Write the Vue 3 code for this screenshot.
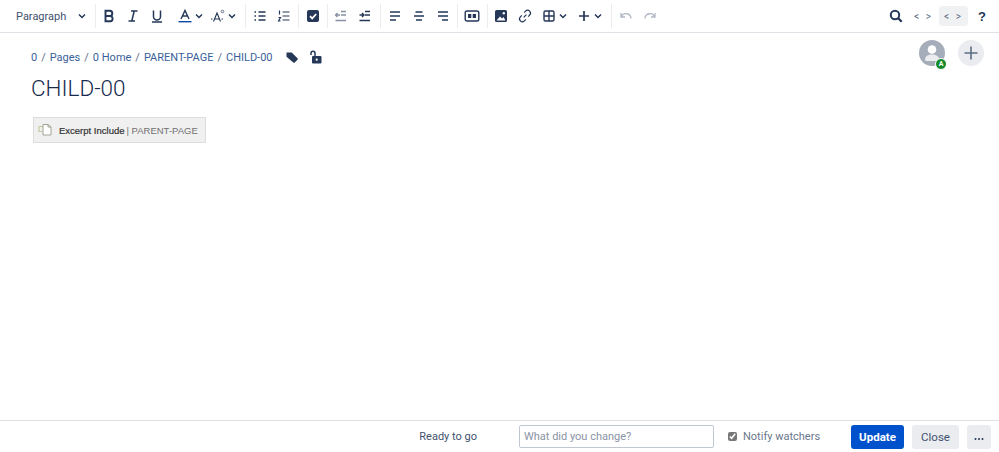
<script setup>
const crumbs = ['0', 'Pages', '0 Home', 'PARENT-PAGE', 'CHILD-00']
</script>

<template>
  <div class="editor">
    <div class="toolbar">
      <div class="group format-group">
        <button class="format" type="button">
          <span>Paragraph</span>
          <svg class="chev" width="10" height="10" viewBox="0 0 10 10"><path d="M2 3.500l3 3 3-3" /></svg>
        </button>
      </div>
      <div class="group tight">
        <button class="tb" type="button"><svg width="16" height="16" viewBox="0 0 16 16"><path class="stk" d="M4.500 2.800h4.200a2.600 2.600 0 0 1 0 5.200H4.500zM4.500 8h4.900a2.700 2.700 0 0 1 0 5.300H4.500z" stroke-width="1.900" /></svg></button>
        <button class="tb" type="button"><svg width="16" height="16" viewBox="0 0 16 16"><path class="stk" d="M6 3h6.500M3.500 13H10M9.200 3L6.800 13" stroke-width="1.500" /></svg></button>
        <button class="tb" type="button"><svg width="16" height="16" viewBox="0 0 16 16"><path class="stk" d="M4.500 2.500v6a3.500 3.500 0 0 0 7 0v-6M3 14h10" stroke-width="1.500" /></svg></button>
        <button class="tb wide color-btn" type="button">
          <svg width="16" height="16" viewBox="0 0 16 16"><path class="stk" d="M4 11L8 2.500 12 11M5.400 8h5.200" stroke-width="1.400" /><path d="M1.500 13h13v1.400h-13z" fill="#0747a6" /></svg>
          <svg class="chev" width="10" height="10" viewBox="0 0 10 10"><path d="M2 3.500l3 3 3-3" /></svg>
        </button>
        <button class="tb wide" type="button">
          <svg width="16" height="16" viewBox="0 0 16 16"><path class="stk" d="M3.500 13.500L7 5l3.500 8.500M1 11h1.500M4 11h6M11.500 11H13" stroke-width="1.100" /><circle cx="12.500" cy="3.500" r="1.300" fill="none" stroke="#42526e" stroke-width="0.800" /></svg>
          <svg class="chev" width="10" height="10" viewBox="0 0 10 10"><path d="M2 3.500l3 3 3-3" /></svg>
        </button>
      </div>
      <div class="group">
        <button class="tb" type="button"><svg width="16" height="16" viewBox="0 0 16 16"><path class="stk" d="M6.500 4h7M6.500 8h7M6.500 12h7M2.500 4h1.500M2.500 8h1.500M2.500 12h1.500" stroke-width="1.300" /></svg></button>
        <button class="tb" type="button"><svg width="16" height="16" viewBox="0 0 16 16"><path class="stk" d="M6.500 4h7M6.500 8h7M6.500 12h7M3.500 2.500v4M2.500 9.500h2l-2 3.500h2" stroke-width="1.200" /></svg></button>
      </div>
      <div class="group">
        <button class="tb" type="button"><svg width="16" height="16" viewBox="0 0 16 16"><rect x="2" y="2" width="12" height="12" rx="2" fill="#253858" /><path d="M5 8.200l2.200 2.200L11.200 6" fill="none" stroke="#fff" stroke-width="1.700" /></svg></button>
      </div>
      <div class="group tight roomy">
        <button class="tb muted" type="button"><svg width="16" height="16" viewBox="0 0 16 16"><path class="stk" d="M8 3.500h5M8 7h5M2.500 12.500h10.500M7 7H2.500M4.500 5l-2 2 2 2" stroke-width="1.300" /></svg></button>
        <button class="tb" type="button"><svg width="16" height="16" viewBox="0 0 16 16"><path class="stk" d="M8 3.500h5M8 7h5M2.500 12.500h10.500M2.500 7H7M5 5l2 2-2 2" stroke-width="1.400" /></svg></button>
      </div>
      <div class="group">
        <button class="tb" type="button"><svg width="16" height="16" viewBox="0 0 16 16"><path class="stk" d="M3 4h10M3 8h10M3 12h6" stroke-width="1.500" /></svg></button>
        <button class="tb" type="button"><svg width="16" height="16" viewBox="0 0 16 16"><path class="stk" d="M3 8h10M4.500 4h7M5 12h6" stroke-width="1.500" /></svg></button>
        <button class="tb" type="button"><svg width="16" height="16" viewBox="0 0 16 16"><path class="stk" d="M3 4h10M3 8h10M7 12h6" stroke-width="1.500" /></svg></button>
      </div>
      <div class="group roomy">
        <button class="tb" type="button"><svg width="16" height="16" viewBox="0 0 16 16"><rect x="1.200" y="3" width="13.600" height="10" rx="1.800" fill="none" stroke="#253858" stroke-width="1.400" /><path d="M4 6h3.300v4H4zM8.700 6H12v4H8.700z" fill="#253858" /></svg></button>
      </div>
      <div class="group tight">
        <button class="tb" type="button"><svg width="16" height="16" viewBox="0 0 16 16"><rect x="2" y="2" width="12" height="12" rx="1.500" fill="#253858" /><path d="M3.500 12.500l3.500-4 2 2 1.500-1.500 2 3.500z" fill="#fff" /><circle cx="10.800" cy="5.200" r="1.200" fill="#fff" /></svg></button>
        <button class="tb" type="button"><svg width="16" height="16" viewBox="0 0 16 16"><path class="stk" d="M6.700 9.300l2.700-2.700M7.200 4.600l1.400-1.400a2.800 2.800 0 0 1 4 4l-1.400 1.400M8.800 11.400l-1.400 1.400a2.800 2.800 0 0 1-4-4l1.400-1.400" stroke-width="1.200" /></svg></button>
        <button class="tb wide table-btn" type="button">
          <svg width="16" height="16" viewBox="0 0 16 16"><rect x="3" y="3" width="10" height="10" rx="1.500" fill="none" stroke="#253858" stroke-width="1.400" /><path d="M8 3v10M3 8h10" stroke="#253858" stroke-width="1.400" /></svg>
          <svg class="chev" width="10" height="10" viewBox="0 0 10 10"><path d="M2 3.500l3 3 3-3" /></svg>
        </button>
        <button class="tb wide plus-btn" type="button">
          <svg width="16" height="16" viewBox="0 0 16 16"><path class="stk" d="M8 3v10M3 8h10" stroke-width="1.700" /></svg>
          <svg class="chev" width="10" height="10" viewBox="0 0 10 10"><path d="M2 3.500l3 3 3-3" /></svg>
        </button>
      </div>
      <div class="group last">
        <button class="tb faint" type="button"><svg width="16" height="16" viewBox="0 0 16 16"><path class="stk" d="M3 5v4h4M3.300 9a5 5 0 0 1 9.700 1.500" stroke-width="1.300" /></svg></button>
        <button class="tb faint" type="button"><svg width="16" height="16" viewBox="0 0 16 16"><path class="stk" d="M13 5v4H9M12.700 9A5 5 0 0 0 3 10.500" stroke-width="1.300" /></svg></button>
      </div>
      <div class="tool-right">
        <button class="tb" type="button"><svg width="16" height="16" viewBox="0 0 16 16"><circle cx="7" cy="7" r="4.200" fill="none" stroke="#253858" stroke-width="2" /><path d="M10 10l3.700 3.700" stroke="#253858" stroke-width="2.300" /></svg></button>
        <button class="code" type="button">&lt; &gt;</button>
        <button class="code active" type="button">&lt; &gt;</button>
        <button class="help" type="button">?</button>
      </div>
    </div>

    <div class="content">
      <div class="page-head">
        <nav class="crumbs">
          <template v-for="(c, i) in crumbs" :key="c">
            <span v-if="i" class="slash">/</span>
            <a>{{ c }}</a>
          </template>
          <svg class="meta tag" width="16" height="16" viewBox="0 0 16 16"><path d="M2.500 3.500h5.200l5.800 5.800a1 1 0 0 1 0 1.400l-2.800 2.800a1 1 0 0 1-1.400 0L2.500 7.700z" fill="#253858" /></svg>
          <svg class="meta" width="16" height="16" viewBox="0 0 16 16"><rect x="4" y="7" width="9.500" height="7.500" rx="1" fill="#253858" /><circle cx="8.700" cy="10.700" r="1.100" fill="#fff" /><path d="M3 6V4.200a2 2 0 0 1 4 0V7" fill="none" stroke="#253858" stroke-width="1.500" /></svg>
        </nav>
        <div class="people">
          <div class="avatar">
            <svg width="26" height="26" viewBox="0 0 26 26"><circle cx="13" cy="13" r="13" fill="#a5adba" /><circle cx="13" cy="9.500" r="4.300" fill="#fff" /><path d="M6 19.500c0-3.500 3-5 7-5s7 1.500 7 5a1.500 1.500 0 0 1-1.500 1.500h-11A1.500 1.500 0 0 1 6 19.500z" fill="#ebecf0" /></svg>
            <span class="badge">A</span>
          </div>
          <button class="add" type="button"><svg width="16" height="16" viewBox="0 0 16 16"><path d="M8 1.500v13M1.500 8h13" stroke="#5e6c84" stroke-width="1.600" fill="none" /></svg></button>
        </div>
      </div>
      <h1 class="title">CHILD-00</h1>
      <div class="macro">
        <svg width="16" height="14" viewBox="0 0 16 14"><path d="M1 3.500h4M1 3.500v5h3" fill="none" stroke="#c5c89a" stroke-width="1.100" /><path d="M5 1.500h5l3 2.500v8H5z" fill="#fff" stroke="#9a9a8a" stroke-width="0.900" /><path d="M10 1.500V4h3" fill="none" stroke="#9a9a8a" stroke-width="0.900" /></svg>
        <span class="macro-name">Excerpt Include</span>
        <span class="macro-param">| PARENT-PAGE</span>
      </div>
    </div>

    <div class="footer">
      <span class="status">Ready to go</span>
      <input class="comment" type="text" placeholder="What did you change?" />
      <label class="notify"><input type="checkbox" checked /> <span>Notify watchers</span></label>
      <button class="btn btn-primary" type="button">Update</button>
      <button class="btn btn-close" type="button">Close</button>
      <button class="btn btn-more" type="button">
        <svg width="10" height="4" viewBox="0 0 10 4"><circle cx="1.500" cy="2" r="1" /><circle cx="5" cy="2" r="1" /><circle cx="8.500" cy="2" r="1" /></svg>
      </button>
    </div>
  </div>
</template>

<style>
html, body { margin: 0; background: #fff; }
</style>

<style scoped>
.editor {
  height: 452px;
  display: flex;
  flex-direction: column;
  font-family: Roboto, "Noto Sans", sans-serif;
  color: #172b4d;
  overflow: hidden;
}

button {
  border: 0;
  background: transparent;
  padding: 0;
  font: inherit;
}

.toolbar {
  height: 32px;
  flex: none;
  display: flex;
  align-items: center;
  border-bottom: 1px solid #dfe1e6;
}

.group {
  display: flex;
  align-items: center;
  height: 24px;
  padding: 0 2px;
  border-right: 1px solid #ebecf0;
}

.group.tight { padding-left: 1px; }
.group.roomy { padding-right: 3px; }
.group.last { border-right: 0; }
.format-group { padding: 0; }

.format {
  width: 95px;
  display: flex;
  align-items: center;
  justify-content: space-between;
  padding: 0 8px 0 16px;
  box-sizing: border-box;
  font-size: 11px;
  color: #42526e;
}

.tb {
  width: 24px;
  height: 24px;
  flex: none;
  display: flex;
  align-items: center;
  justify-content: center;
}

.tb.wide { width: 33px; justify-content: flex-start; padding-left: 0; }
.color-btn { margin-left: 8px; }
.table-btn { margin-left: 4px; }
.plus-btn { margin-left: 2px; }
.tb.muted { opacity: 0.55; }
.tb.faint { opacity: 0.35; }

.stk {
  fill: none;
  stroke: #253858;
}

.chev {
  flex: none;
  margin-left: 1px;
}

.chev path {
  fill: none;
  stroke: #253858;
  stroke-width: 1.500;
}

.tool-right {
  margin-left: auto;
  display: flex;
  align-items: center;
  padding-right: 3px;
}

.code {
  width: 29px;
  height: 20px;
  margin-left: 1px;
  font-size: 10px;
  letter-spacing: 2px;
  color: #5e6c84;
  border-radius: 3px;
}

.code.active { background: #f0f1f3; }

.help {
  width: 28px;
  font-family: "Liberation Sans", sans-serif;
  font-size: 13px;
  font-weight: 700;
  color: #253858;
}

.content {
  flex: 1;
  padding: 0 15px 0 31px;
}

.page-head {
  display: flex;
  align-items: center;
  justify-content: space-between;
  height: 40px;
}

.crumbs {
  display: flex;
  align-items: center;
  margin-top: 8px;
  font-size: 11px;
  color: #5e6c84;
}

.crumbs a { color: #3a5f9a; }
.slash { margin: 0 4px; }
.meta { margin-left: 8px; }
.tag { margin-left: 11px; }

.people {
  display: flex;
  align-items: center;
  gap: 13px;
}

.avatar {
  position: relative;
  width: 26px;
  height: 26px;
}

.badge {
  position: absolute;
  right: -2px;
  bottom: -4px;
  width: 10px;
  height: 10px;
  border-radius: 50%;
  background: #14892c;
  border: 1px solid #fff;
  color: #fff;
  font-size: 7px;
  font-weight: 700;
  line-height: 10px;
  text-align: center;
}

.add {
  width: 26px;
  height: 26px;
  border-radius: 50%;
  background: #ebecf0;
  display: flex;
  align-items: center;
  justify-content: center;
}

.title {
  margin: -1px 0 0;
  font-size: 22.500px;
  line-height: 32px;
  font-weight: 300;
  color: #172b4d;
}

.macro {
  margin: 13px 0 0 2px;
  width: 173px;
  height: 26px;
  box-sizing: border-box;
  display: flex;
  align-items: center;
  padding-left: 4px;
  gap: 5px;
  background: #f0f0f0;
  border: 1px solid #dddddd;
  font-family: "Liberation Sans", sans-serif;
  font-size: 9.500px;
  white-space: nowrap;
}

.macro-name { color: #333; -webkit-text-stroke: 0.2px #333; }
.macro-param { color: #707070; margin-left: -3px; }

.footer {
  height: 31px;
  flex: none;
  display: flex;
  align-items: center;
  border-top: 1px solid #dfe1e6;
  padding-right: 8px;
  font-size: 11px;
  color: #6b778c;
}

.status {
  margin-left: auto;
  color: #42526e;
}

.comment {
  width: 195px;
  height: 23px;
  box-sizing: border-box;
  margin-left: 42px;
  padding: 0 4px;
  border: 1px solid #c1c7d0;
  border-radius: 2px;
  font: inherit;
  outline: 0;
}

.comment::placeholder { color: #8993a4; }

.notify {
  display: flex;
  align-items: center;
  gap: 6px;
  width: 123px;
  margin-left: 14px;
}

.notify input {
  width: 9px;
  height: 9px;
  margin: 0;
  accent-color: #777;
}

.btn {
  height: 24px;
  border-radius: 3px;
  font-size: 11.500px;
  color: #42526e;
  background: #ebecf0;
}

.btn-primary {
  width: 53px;
  background: #0052cc;
  color: #fff;
  font-weight: 700;
}

.btn-close { width: 47px; margin-left: 8px; }
.btn-more { width: 24px; margin-left: 8px; color: #253858; fill: #253858; }
</style>
